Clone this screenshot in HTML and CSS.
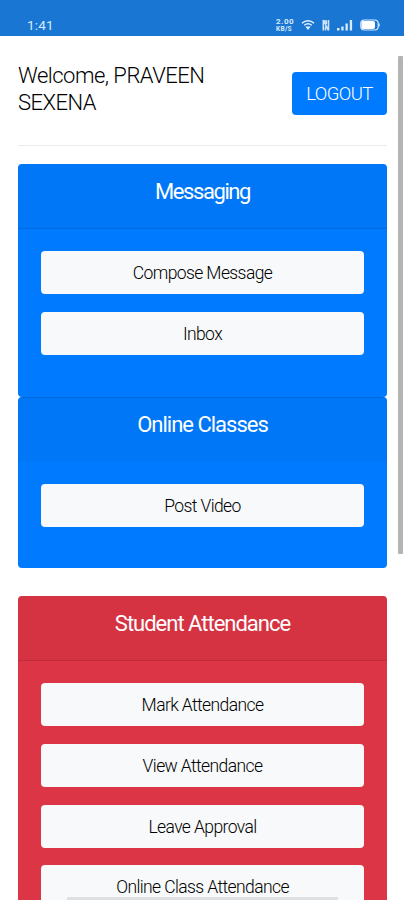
FILE: index.html
```
<!DOCTYPE html>
<html lang="en">
<head>
    <meta charset="UTF-8">
    <meta name="viewport" content="width=device-width, initial-scale=1.0">
    <title>Dashboard</title>
    <link rel="stylesheet" href="styles.css">
</head>
<body>
    <div class="status-bar">
        <span class="time">1:41</span>
        <div class="status-icons">
            <div class="speed"><span>2.00</span><span>KB/S</span></div>
            <svg class="wifi" width="14" height="12" viewBox="0 0 14 12" fill="none" stroke="#e4f1ff">
                <path d="M1 4.2C4.5 .8 9.500 .8 13 4.200" stroke-width="1.500"/>
                <path d="M3.200 6.300C5.500 4.300 8.500 4.300 10.800 6.300" stroke-width="1.400"/>
                <path d="M4.300 7.500h5.400L7 11z" fill="#e4f1ff" stroke="none"/>
            </svg>
            <svg class="nfc" width="8" height="12" viewBox="0 0 8 12" fill="none" stroke="#cfe4fa" stroke-width="1.600">
                <path d="M1.300 11.500V1l5.200 10.500V1M1.300 2h3v3M3.500 7.500v4"/>
            </svg>
            <svg class="signal" width="16" height="12" viewBox="0 0 16 12" fill="#d9eafc">
                <rect x="0" y="9" width="2.500" height="2.500"/>
                <rect x="4.300" y="7.500" width="2.300" height="4"/>
                <rect x="8.500" y="4.500" width="2.300" height="7"/>
                <rect x="12.800" y="1" width="2.300" height="10.500"/>
            </svg>
            <svg class="battery" width="20" height="12" viewBox="0 0 20 12" fill="none" stroke="#d9eafc">
                <rect x=".8" y="1" width="17.400" height="10" rx="3.500" stroke-width="1.200"/>
                <rect x="1.500" y="2" width="13.500" height="8" rx="2" fill="#fff" stroke="none"/>
                <path d="M19.200 4.500v3"/>
            </svg>
        </div>
    </div>

    <div class="container">
        <div class="header">
            <h1>Welcome, PRAVEEN SEXENA</h1>
            <a href="#" class="logout-btn">LOGOUT</a>
        </div>

        <div class="card blue messaging">
            <h2 class="card-header">Messaging</h2>
            <div class="card-body">
                <a href="#" class="btn">Compose Message</a>
                <a href="#" class="btn">Inbox</a>
            </div>
        </div>

        <div class="card blue classes">
            <h2 class="card-header">Online Classes</h2>
            <div class="card-body">
                <a href="#" class="btn">Post Video</a>
            </div>
        </div>

        <div class="card red">
            <h2 class="card-header">Student Attendance</h2>
            <div class="card-body">
                <a href="#" class="btn">Mark Attendance</a>
                <a href="#" class="btn">View Attendance</a>
                <a href="#" class="btn">Leave Approval</a>
                <a href="#" class="btn">Online Class Attendance</a>
            </div>
        </div>
    </div>

    <div class="scrollbar"></div>
    <div class="gesture-bar"></div>
</body>
</html>
```
FILE: styles.css
```
* {
    box-sizing: border-box;
}
body {
    font-family: Roboto, "Liberation Sans", sans-serif;
    background-color: #fff;
    color: #212529;
    margin: 0;
    height: 900px;
    position: relative;
    overflow: hidden;
}
.status-bar {
    display: flex;
    justify-content: space-between;
    height: 36px;
    padding: 18px 24px 0 27px;
    background-color: #1976d2;
    color: #d9eafc;
}
.time {
    font-size: 13.5px;
    line-height: 15px;
    letter-spacing: 0.2px;
}
.status-icons {
    display: flex;
    align-items: flex-start;
    gap: 7px;
    padding-top: 1px;
}
.speed {
    display: flex;
    flex-direction: column;
    width: 18px;
    font-size: 8px;
    font-weight: 700;
    line-height: 6px;
    letter-spacing: 0.5px;
    white-space: nowrap;
}
.speed span + span {
    margin-top: 1px;
    font-size: 6.5px;
    letter-spacing: 0.3px;
}
.container {
    padding: 0 17px 0 18px;
}
.header {
    display: flex;
    justify-content: space-between;
    align-items: flex-start;
    height: 110px;
    margin-bottom: 18px;
    padding-top: 26px;
    border-bottom: 1px solid #ebebeb;
}
h1 {
    width: 210px;
    margin: 0;
    font-size: 22px;
    font-weight: 300;
    line-height: 27px;
    letter-spacing: -0.5px;
    color: #000;
}
.logout-btn {
    width: 95px;
    height: 43px;
    margin-top: 10px;
    background-color: #007bff;
    border-radius: 4px;
    color: #fff;
    font-size: 18.5px;
    font-weight: 300;
    line-height: 44px;
    letter-spacing: -0.6px;
    text-align: center;
    text-decoration: none;
}
.card {
    border-radius: 4px;
    overflow: hidden;
}
.blue {
    background-color: #007bff;
}
.red {
    background-color: #dc3545;
}
.classes {
    margin-bottom: 27.6px;
}
.card-header {
    height: 65px;
    margin: 0;
    padding-top: 14px;
    background-color: rgba(0, 0, 0, 0.03);
    border-bottom: 1px solid rgba(0, 0, 0, 0.1);
    color: #fff;
    font-size: 22px;
    font-weight: 400;
    line-height: 27px;
    letter-spacing: -1px;
    text-align: center;
}
.messaging .card-header {
    letter-spacing: -1.4px;
}
.classes .card-header {
    padding-top: 13px;
    border-top: 1px solid rgba(0, 0, 0, 0.1);
    border-bottom: none;
}
.card-body {
    padding: 22.2px 23px 24px;
}
.btn {
    display: block;
    height: 43px;
    margin-bottom: 17.7px;
    background-color: #f8f9fa;
    border-radius: 4px;
    color: #000;
    font-size: 17.5px;
    font-weight: 300;
    line-height: 44px;
    letter-spacing: -0.6px;
    text-align: center;
    text-decoration: none;
}
.scrollbar {
    position: absolute;
    top: 56px;
    right: 1px;
    width: 5px;
    height: 498px;
    border-radius: 1px;
    background-color: #b4b4b4;
}
.gesture-bar {
    position: absolute;
    bottom: 0;
    left: 67px;
    width: 271px;
    height: 3px;
    background-color: #dfe0e1;
}
```
